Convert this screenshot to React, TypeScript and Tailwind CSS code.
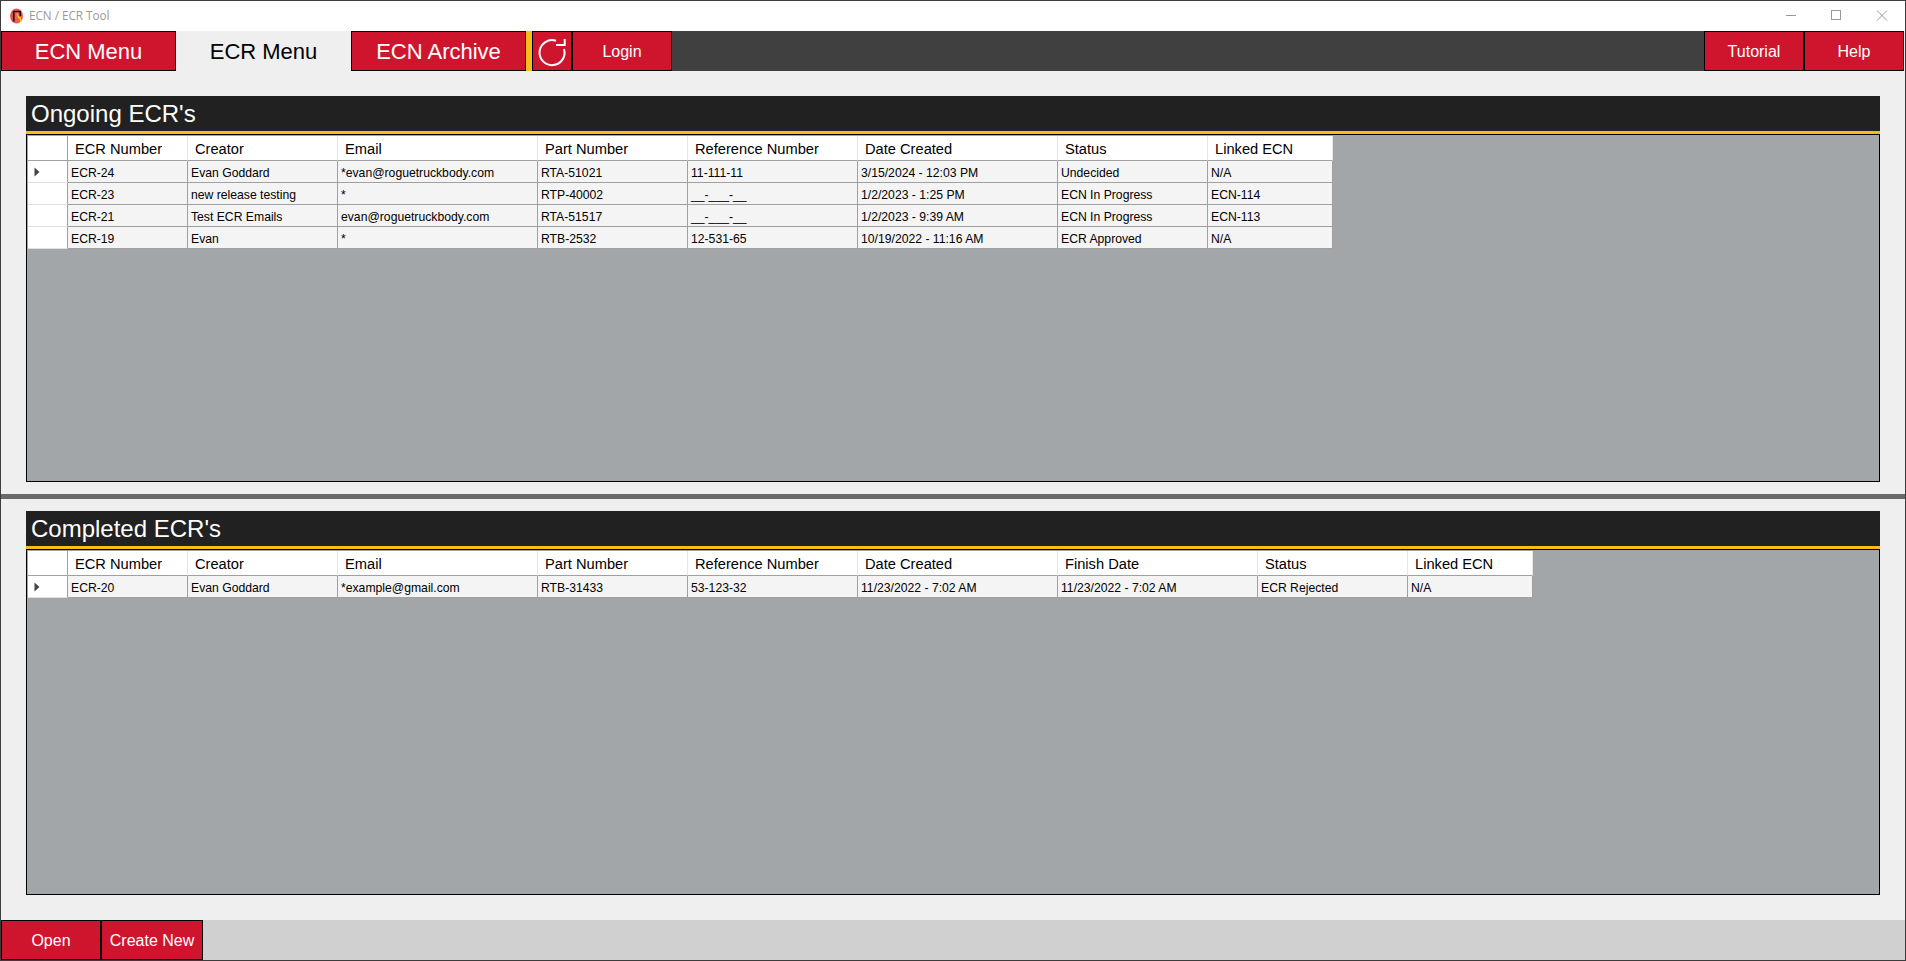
const ongoingCols = [
  { label: 'ECR Number', width: 'w-[120px]' },
  { label: 'Creator', width: 'w-[150px]' },
  { label: 'Email', width: 'w-[200px]' },
  { label: 'Part Number', width: 'w-[150px]' },
  { label: 'Reference Number', width: 'w-[170px]' },
  { label: 'Date Created', width: 'w-[200px]' },
  { label: 'Status', width: 'w-[150px]' },
  { label: 'Linked ECN', width: 'w-[125px]' },
];

const completedCols = [
  { label: 'ECR Number', width: 'w-[120px]' },
  { label: 'Creator', width: 'w-[150px]' },
  { label: 'Email', width: 'w-[200px]' },
  { label: 'Part Number', width: 'w-[150px]' },
  { label: 'Reference Number', width: 'w-[170px]' },
  { label: 'Date Created', width: 'w-[200px]' },
  { label: 'Finish Date', width: 'w-[200px]' },
  { label: 'Status', width: 'w-[150px]' },
  { label: 'Linked ECN', width: 'w-[125px]' },
];

const ongoingRows = [
  ['ECR-24', 'Evan Goddard', '*evan@roguetruckbody.com', 'RTA-51021', '11-111-11', '3/15/2024 - 12:03 PM', 'Undecided', 'N/A'],
  ['ECR-23', 'new release testing', '*', 'RTP-40002', '__-___-__', '1/2/2023 - 1:25 PM', 'ECN In Progress', 'ECN-114'],
  ['ECR-21', 'Test ECR Emails', 'evan@roguetruckbody.com', 'RTA-51517', '__-___-__', '1/2/2023 - 9:39 AM', 'ECN In Progress', 'ECN-113'],
  ['ECR-19', 'Evan', '*', 'RTB-2532', '12-531-65', '10/19/2022 - 11:16 AM', 'ECR Approved', 'N/A'],
];

const completedRows = [
  ['ECR-20', 'Evan Goddard', '*example@gmail.com', 'RTB-31433', '53-123-32', '11/23/2022 - 7:02 AM', '11/23/2022 - 7:02 AM', 'ECR Rejected', 'N/A'],
];

function AppLogo() {
  return (
    <svg width="16" height="16" viewBox="0 0 16 16" className="shrink-0">
      <ellipse cx="7.5" cy="8" rx="6.5" ry="7.5" fill="#ef5a52" />
      <path d="M4.7 13.5V3.5H11.3V8" fill="none" stroke="#141414" strokeWidth="1.7" />
      <path d="M8 5.5L9.5 9.5L11 10L12 14" fill="none" stroke="#f7e21b" strokeWidth="1.2" />
    </svg>
  );
}

function RefreshIcon() {
  return (
    <svg width="38" height="38" viewBox="0 0 38 38" fill="none" stroke="white" strokeWidth="2">
      <path d="M31 17A12.5 12.5 0 1 1 23 8.8" />
      <path d="M23 13H31.7V7" />
    </svg>
  );
}

function RedButton({ label, width, large }: { label: string; width: string; large?: boolean }) {
  return (
    <button
      className={`${width} h-full shrink-0 bg-[#cf152d] border border-black text-white flex items-center justify-center ${large ? 'text-[22px] pt-0' : 'text-[16px] pt-[2px]'}`}
    >
      {label}
    </button>
  );
}

function Grid({ cols, rows }: { cols: { label: string; width: string }[]; rows: string[][] }) {
  return (
    <div className="flex-1 min-h-0 border border-black bg-[#a2a6a9] p-px">
      <div className="flex h-[25px]">
        <div className="w-[40px] shrink-0 bg-white border-r border-b border-r-[#a0a0a0] border-b-[#a0a0a0]" />
        {cols.map((col) => (
          <div
            key={col.label}
            className={`${col.width} shrink-0 bg-white border-r border-b border-r-[#e6e6e6] border-b-[#a0a0a0] pl-[7px] pt-[2px] flex items-center text-[14.67px] text-black`}
          >
            {col.label}
          </div>
        ))}
      </div>
      {rows.map((row, i) => (
        <div key={row[0]} className="flex h-[22px]">
          <div className="w-[40px] shrink-0 bg-white border-r border-b border-r-[#a0a0a0] border-b-[#e0e0e0] flex items-center pl-[6px]">
            {i === 0 && (
              <svg width="6" height="10" viewBox="0 0 6 10">
                <path d="M0.5 0.5L5.5 5L0.5 9.5Z" fill="#444444" />
              </svg>
            )}
          </div>
          {row.map((cell, j) => (
            <div
              key={j}
              className={`${cols[j].width} shrink-0 bg-[#f4f4f4] border-r border-b border-[#a0a0a0] pl-[3px] pt-[3px] flex items-center text-[12.2px] text-black whitespace-nowrap overflow-hidden`}
            >
              {cell}
            </div>
          ))}
        </div>
      ))}
    </div>
  );
}

function Panel({ title, cols, rows }: { title: string; cols: { label: string; width: string }[]; rows: string[][] }) {
  return (
    <div className="flex-1 min-h-0 flex flex-col">
      <div className="h-[35px] shrink-0 bg-[#212121] text-white text-[24px] pl-[5px] pt-px flex items-center">{title}</div>
      <div className="h-[3px] shrink-0 bg-[#fbbc1b]" />
      <Grid cols={cols} rows={rows} />
    </div>
  );
}

export default function App() {
  return (
    <div className="h-[961px] w-[1906px] flex flex-col overflow-hidden border border-[#3c3c3c] bg-[#efefef] font-['Liberation_Sans',Arial,sans-serif]">
      <div className="h-[30px] shrink-0 bg-white flex items-center pl-[8px]">
        <AppLogo />
        <span className="ml-[4px] text-[11.7px] text-[#999999] font-['Open_Sans',sans-serif]">ECN / ECR Tool</span>
        <div className="ml-auto flex items-center text-[#999999]">
          <svg width="46" height="30" viewBox="0 0 46 30" stroke="currentColor" fill="none">
            <path d="M19 14.5H29" />
          </svg>
          <svg width="46" height="30" viewBox="0 0 46 30" stroke="currentColor" fill="none">
            <rect x="18.5" y="9.5" width="9" height="9" />
          </svg>
          <svg width="46" height="30" viewBox="0 0 46 30" stroke="currentColor" fill="none">
            <path d="M18 9.5L28 19.5M28 9.5L18 19.5" />
          </svg>
        </div>
      </div>

      <div className="h-[40px] shrink-0 flex pr-px">
        <RedButton label="ECN Menu" width="w-[175px]" large />
        <button className="w-[175px] h-full bg-[#efefef] text-black text-[22px]">ECR Menu</button>
        <RedButton label="ECN Archive" width="w-[175px]" large />
        <div className="w-[6px] bg-[#fbbc1b]" />
        <button className="w-[40px] h-full bg-[#cf152d] border border-black flex items-center justify-center">
          <RefreshIcon />
        </button>
        <RedButton label="Login" width="w-[100px]" />
        <div className="flex-1 bg-[#404040]" />
        <RedButton label="Tutorial" width="w-[100px]" />
        <RedButton label="Help" width="w-[100px]" />
      </div>

      <div className="h-[423px] shrink-0 flex flex-col px-[25px] pt-[25px] pb-[12px]">
        <Panel title="Ongoing ECR's" cols={ongoingCols} rows={ongoingRows} />
      </div>
      <div className="h-[5px] shrink-0 bg-[#696969]" />
      <div className="flex-1 min-h-0 flex flex-col px-[25px] pt-[12px] pb-[25px]">
        <Panel title="Completed ECR's" cols={completedCols} rows={completedRows} />
      </div>

      <div className="h-[40px] shrink-0 bg-[#d0d0d0] flex">
        <RedButton label="Open" width="w-[100px]" />
        <RedButton label="Create New" width="w-[102px]" />
      </div>
    </div>
  );
}
